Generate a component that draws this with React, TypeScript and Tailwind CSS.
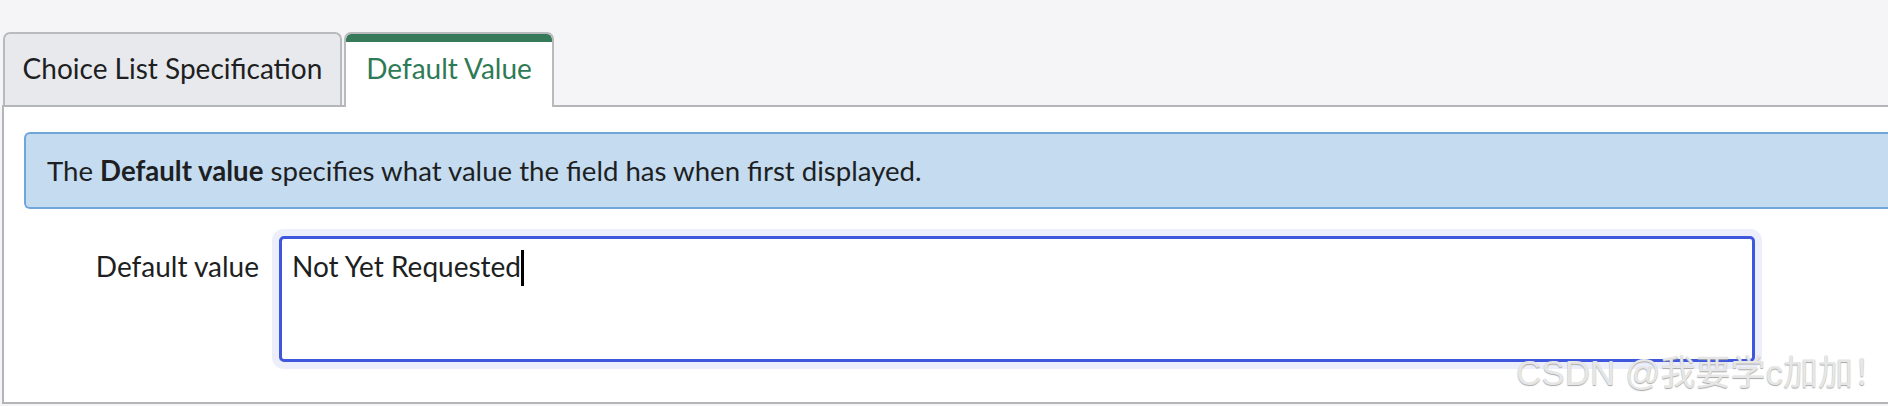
import React from 'react';

const tabs = [
    { id: 'choice', label: 'Choice List Specification' },
    { id: 'default', label: 'Default Value' },
];

const App: React.FC = () => {
    const activeTab = 'default';

    return (
        <div className="relative w-[1888px] h-[406px] overflow-hidden bg-[#f5f5f7] font-['Lato','Noto_Sans',sans-serif] text-[#1d1f23]">
            {/* Tab strip */}
            <div className="flex items-end gap-[2px] pl-[3px] pt-[32px] h-[105px]">
                {tabs.map(tab =>
                    tab.id === activeTab ? (
                        <div
                            key={tab.id}
                            className="relative z-10 -mb-[2px] h-[75px] w-[210px] flex flex-col rounded-t-[7px] border-2 border-b-0 border-[#b8babe] bg-white overflow-hidden"
                        >
                            <div className="h-[8px] bg-[#367a59] rounded-t-[5px]" />
                            <div className="flex-1 flex items-center justify-center pb-[14px] text-[28px] leading-[34px] text-[#2f7a56]">{tab.label}</div>
                        </div>
                    ) : (
                        <div
                            key={tab.id}
                            className="h-[73px] w-[339px] flex items-center justify-center pb-[4px] rounded-t-[7px] border-2 border-b-0 border-[#b8babe] bg-[#e8e9ed] text-[28px] leading-[34px]"
                        >
                            {tab.label}
                        </div>
                    )
                )}
            </div>

            {/* Panel */}
            <div className="ml-[2px] h-[299px] border-2 border-r-0 border-[#b3b5b9] bg-white pt-[25px]">
                <div className="ml-[20px] h-[77px] flex items-center pl-[21px] rounded-l-[6px] border-2 border-r-0 border-[#6fa7da] bg-[#c4dbf0] text-[27.6px] leading-[34px]">
                    <p>
                        The <span className="font-bold">Default value</span> specifies what value the field has when first displayed.
                    </p>
                </div>

                <div className="flex items-start mt-[27px]">
                    <label className="w-[255px] text-right pt-[13px] text-[28px] leading-[34px]">Default value</label>
                    <div className="ml-[20px] w-[1476px] h-[126px] rounded-[5px] border-[3px] border-[#3f57dc] shadow-[0_0_0_7px_#eceefb] bg-white pl-[10px] pt-[9px]">
                        <div className="flex items-center text-[28px] leading-[34px]">
                            <span>Not Yet Requested</span>
                            <span className="relative top-[2px] h-[36px] w-[3px] bg-black" />
                        </div>
                    </div>
                </div>
            </div>

            {/* Watermark */}
            <div className="absolute right-0 bottom-[16px] text-[35px] leading-none text-[#e6e6e6] [text-shadow:0_1px_1px_#a8a8a8] font-['Liberation_Sans','Noto_Sans_CJK_SC',sans-serif]">
                CSDN @我要学c加加！
            </div>
        </div>
    );
};

export default App;
